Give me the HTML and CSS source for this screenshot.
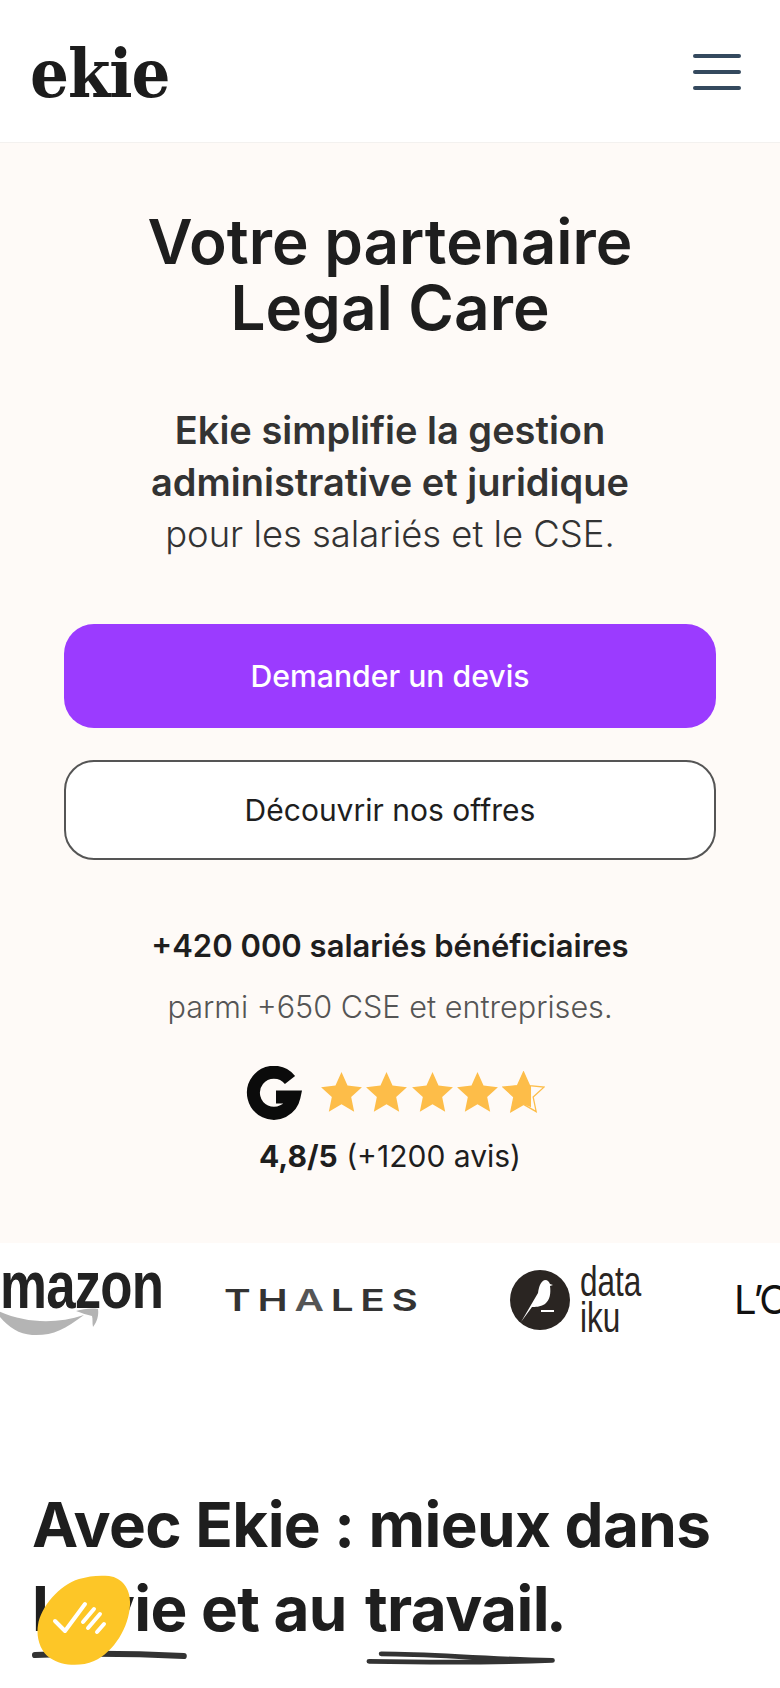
FILE: index.html
```html
<!DOCTYPE html>
<html lang="fr">
<head>
    <meta charset="UTF-8">
    <meta name="viewport" content="width=device-width, initial-scale=1.0">
    <title>Ekie - Votre partenaire Legal Care</title>
    <link rel="stylesheet" href="styles.css">
</head>
<body>
    <header class="navbar">
        <div class="logo">ekie</div>
        <div class="burger"><span></span><span></span><span></span></div>
    </header>

    <section class="hero">
        <h1>Votre partenaire<br>Legal Care</h1>
        <p class="lead"><strong>Ekie simplifie la gestion<br>administrative et juridique</strong>pour les salariés et le CSE.</p>
        <a href="#devis" class="btn btn-primary">Demander un devis</a>
        <a href="#offres" class="btn btn-outline">Découvrir nos offres</a>
        <p class="stat">+420 000 salariés bénéficiaires</p>
        <p class="stat-sub">parmi +650 CSE et entreprises.</p>
        <div class="rating">
            <svg class="google" viewBox="0 0 56 56"><path d="M44 14A20.500 20.500 0 1 0 48 31H30" fill="none" stroke="#0b0b0b" stroke-width="13"/></svg>
            <div class="stars">
                <svg class="star" viewBox="0 0 40 40"><path d="M20 1l5.600 12.600 13.400 1.400-10 9.200 2.800 13.600L20 31l-11.800 6.800L11 24.200 1 15l13.400-1.400z" fill="#fdbd49"/></svg>
                <svg class="star" viewBox="0 0 40 40"><path d="M20 1l5.600 12.600 13.400 1.400-10 9.200 2.800 13.600L20 31l-11.800 6.800L11 24.200 1 15l13.400-1.400z" fill="#fdbd49"/></svg>
                <svg class="star" viewBox="0 0 40 40"><path d="M20 1l5.600 12.600 13.400 1.400-10 9.200 2.800 13.600L20 31l-11.800 6.800L11 24.200 1 15l13.400-1.400z" fill="#fdbd49"/></svg>
                <svg class="star" viewBox="0 0 40 40"><path d="M20 1l5.600 12.600 13.400 1.400-10 9.200 2.800 13.600L20 31l-11.800 6.800L11 24.200 1 15l13.400-1.400z" fill="#fdbd49"/></svg>
                <svg class="star" viewBox="0 0 40 40"><path d="M20 1l5.600 12.600 13.400 1.400-10 9.200 2.800 13.600L20 31l-11.800 6.800L11 24.200 1 15l13.400-1.400z" fill="none" stroke="#fdbd49" stroke-width="1.200"/><path d="M20 1l5.600 12.600 1.400.2v19.900L20 31l-11.800 6.800L11 24.200 1 15l13.400-1.400z" fill="#fdbd49"/></svg>
            </div>
        </div>
        <p class="score"><strong>4,8/5</strong> (+1200 avis)</p>
    </section>

    <section class="logos">
        <div class="brand amazon">
            <span>mazon</span>
            <svg viewBox="0 0 170 30"><path d="M-6 1c28 14 60 16 90 6-20 15-32 21-52 20C16 26 4 16-6 1z" fill="#b4b4b4"/><path d="M76 3c7-2 15-3 22-2 1 6-1 13-5 18-1-4 0-8-1-11-5-1-10-3-16-5z" fill="#b4b4b4"/></svg>
        </div>
        <div class="brand thales"><span class="thales-word">TH<span class="thales-a">A</span>LES</span></div>
        <div class="brand dataiku">
            <svg viewBox="0 0 60 60"><circle cx="30" cy="30" r="30" fill="#2a2522"/><path d="M11 52L28 23c1-7 3-12 7-13 3 0 4 2 5 4l3 1-3 1c1 7 0 14-5 18-5 3-10 3-13 3z" fill="#fff"/><path d="M31 40h13v2H31z" fill="#fff"/></svg>
            <span>data<br>iku</span>
        </div>
        <div class="brand loreal">L’OR</div>
    </section>

    <section class="intro">
        <h2>Avec Ekie : mieux dans <span class="scribble">la vie<svg viewBox="0 0 152 12" preserveAspectRatio="none"><path d="M3 7C50 5 110 6 149 8" fill="none" stroke="#333" stroke-width="6" stroke-linecap="round"/></svg></span> et au <span class="scribble scribble-long">travail<svg viewBox="0 0 188 16" preserveAspectRatio="none"><path d="M16 3c50 0 90 5 168 7-50 2-130 2-180 1" fill="none" stroke="#333" stroke-width="5" stroke-linecap="round" stroke-linejoin="round"/></svg></span>.</h2>
    </section>

    <div class="chat-badge">
        <svg viewBox="0 0 94 90"><path d="M72 1c14 2 22 14 21 29-1 22-16 47-36 56-14 6-32 5-44-3C3 76-1 62 1 50 4 32 22 10 42 4c10-3 20-4 30-3z" fill="#fdc627"/><path d="M18 46l10 10 20-27M46 47l11-13M51 53l12-14M60 57l7-8" fill="none" stroke="#fff" stroke-width="4" stroke-linecap="round" stroke-linejoin="round"/></svg>
    </div>
</body>
</html>
```

FILE: styles.css
```css
* {
    margin: 0;
    padding: 0;
    box-sizing: border-box;
    font-family: 'Inter', 'Noto Sans', sans-serif;
}

:root {
    --text-color: #1e1e1e;
    --hero-bg: #fefaf7;
    --primary-color: #9b3bff;
}

html, body {
    height: 1688px;
    overflow: hidden;
    background: white;
    color: var(--text-color);
}

.navbar {
    height: 143px;
    background: white;
    border-bottom: 1px solid #f3f1ef;
    padding: 4px 39px 0 30px;
    display: flex;
    justify-content: space-between;
    align-items: center;
}

.logo {
    font-family: 'DejaVu Serif Condensed', 'DejaVu Serif', serif;
    font-size: 68px;
    font-weight: bold;
    line-height: 70px;
    letter-spacing: -1px;
    color: #1c1c1c;
}

.burger {
    width: 48px;
    margin-bottom: 2px;
    display: flex;
    flex-direction: column;
    gap: 12px;
}

.burger span {
    height: 4px;
    border-radius: 2px;
    background: #34495e;
}

.hero {
    background: var(--hero-bg);
    padding: 66px 64px 67px;
    display: flex;
    flex-direction: column;
    align-items: center;
    text-align: center;
}

.hero h1 {
    font-size: 62px;
    line-height: 66px;
    font-weight: 600;
}

.lead {
    margin-top: 63px;
    font-size: 36.400px;
    line-height: 52px;
    font-weight: 300;
    color: #333;
}

.lead strong {
    display: block;
    font-size: 38px;
    font-weight: 600;
}

.btn {
    display: flex;
    align-items: center;
    justify-content: center;
    width: 100%;
    text-decoration: none;
}

.btn-primary {
    margin-top: 64px;
    height: 104px;
    border-radius: 30px;
    background: var(--primary-color);
    color: white;
    font-size: 30.200px;
    font-weight: 500;
}

.btn-outline {
    margin-top: 32px;
    height: 100px;
    border-radius: 30px;
    border: 2px solid #555;
    background: white;
    color: var(--text-color);
    font-size: 30px;
}

.stat {
    margin-top: 66px;
    font-size: 31px;
    line-height: 40px;
    font-weight: 600;
}

.stat-sub {
    margin-top: 21px;
    font-size: 30.600px;
    line-height: 40px;
    font-weight: 300;
    color: #555;
}

.rating {
    margin-top: 39px;
    margin-left: 10px;
    height: 56px;
    display: flex;
    align-items: center;
    gap: 18px;
}

.google {
    width: 56px;
    height: 56px;
}

.stars {
    display: flex;
    gap: 2.500px;
    margin-bottom: 4px;
}

.star {
    width: 43px;
    height: 43px;
}

.score {
    margin-top: 14px;
    font-size: 30px;
    line-height: 40px;
}

.score strong {
    font-weight: 700;
}

.logos {
    height: 107px;
    padding-top: 6px;
    overflow: hidden;
    display: flex;
    align-items: center;
    background: white;
}

.brand {
    flex-shrink: 0;
}

.amazon {
    width: 162px;
    position: relative;
    height: 84px;
}

.amazon span {
    display: block;
    font-family: 'Liberation Sans', sans-serif;
    font-weight: bold;
    font-size: 66px;
    line-height: 54px;
    letter-spacing: -1px;
    transform: scaleX(0.8);
    transform-origin: left top;
    color: #222;
}

.amazon svg {
    position: absolute;
    left: 0;
    top: 50px;
    width: 170px;
    height: 30px;
}

.thales {
    margin-left: 62px;
    width: 194px;
    font-size: 30px;
    font-weight: 600;
    letter-spacing: 5px;
    color: #333;
    white-space: nowrap;
}

.thales-word {
    display: inline-block;
    transform: scaleX(1.35);
    transform-origin: left center;
}

.thales-a {
    color: #555;
}

.dataiku {
    margin-left: 92px;
    display: flex;
    align-items: center;
    gap: 10px;
}

.dataiku svg {
    width: 60px;
    height: 60px;
}

.dataiku span {
    display: block;
    width: 62px;
    font-family: 'Liberation Sans', sans-serif;
    font-size: 42px;
    line-height: 36px;
    transform: scaleX(0.75);
    transform-origin: left center;
    color: #2a2522;
}

.loreal {
    margin-left: 92px;
    font-size: 40px;
    letter-spacing: -2px;
    color: #111;
    white-space: nowrap;
}

.intro {
    padding: 133px 32px 0;
}

.intro h2 {
    font-size: 62px;
    line-height: 84px;
    font-weight: 700;
    letter-spacing: -0.600px;
}

.scribble {
    position: relative;
    display: inline-block;
}

.scribble svg {
    position: absolute;
    left: 0;
    width: 100%;
    bottom: -9px;
    height: 12px;
}

.scribble-long {
    margin: 0 -3px 0 4px;
}

.scribble-long svg {
    width: 104%;
    height: 15px;
    bottom: -15px;
}

.chat-badge {
    position: fixed;
    left: 37px;
    top: 1575px;
    width: 94px;
    height: 90px;
}

.chat-badge svg {
    display: block;
    width: 100%;
    height: 100%;
}
```
